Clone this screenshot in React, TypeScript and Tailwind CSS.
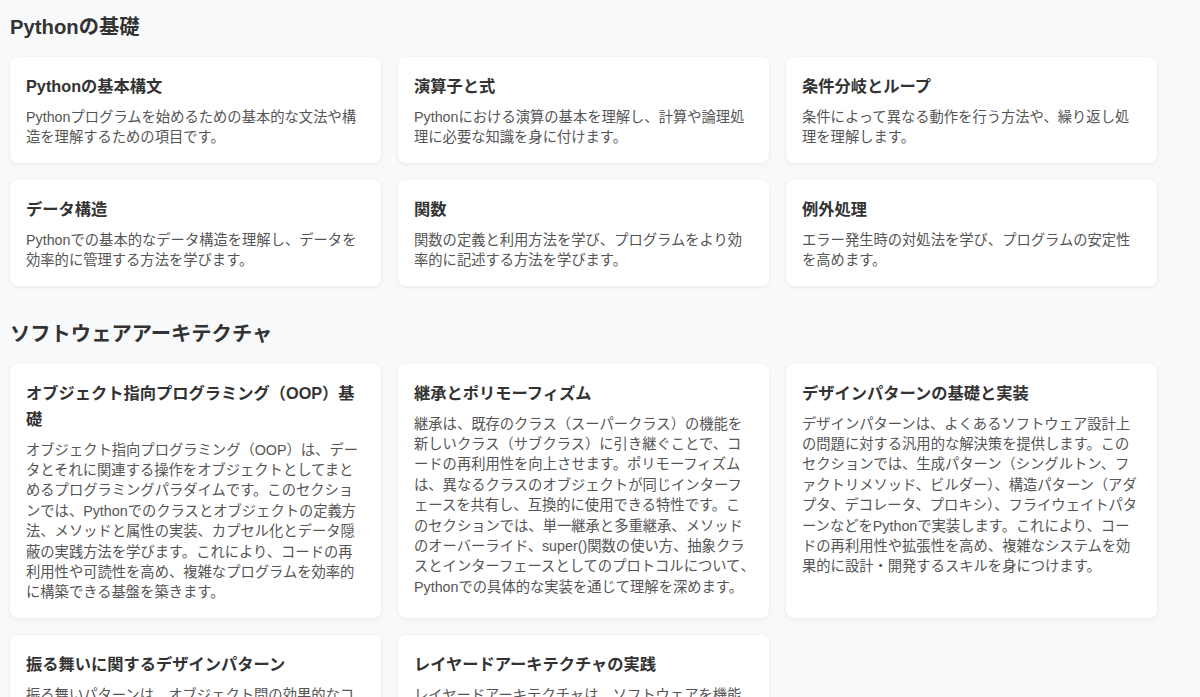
import React from "react";

type Topic = {
  title: string;
  description: React.ReactNode;
};

type Section = {
  heading: string;
  topics: Topic[];
};

const sections: Section[] = [
  {
    heading: "Pythonの基礎",
    topics: [
      {
        title: "Pythonの基本構文",
        description:
          "Pythonプログラムを始めるための基本的な文法や構造を理解するための項目です。",
      },
      {
        title: "演算子と式",
        description:
          "Pythonにおける演算の基本を理解し、計算や論理処理に必要な知識を身に付けます。",
      },
      {
        title: "条件分岐とループ",
        description: "条件によって異なる動作を行う方法や、繰り返し処理を理解します。",
      },
      {
        title: "データ構造",
        description:
          "Pythonでの基本的なデータ構造を理解し、データを効率的に管理する方法を学びます。",
      },
      {
        title: "関数",
        description:
          "関数の定義と利用方法を学び、プログラムをより効率的に記述する方法を学びます。",
      },
      {
        title: "例外処理",
        description: "エラー発生時の対処法を学び、プログラムの安定性を高めます。",
      },
    ],
  },
  {
    heading: "ソフトウェアアーキテクチャ",
    topics: [
      {
        title: "オブジェクト指向プログラミング（OOP）基礎",
        description:
          "オブジェクト指向プログラミング（OOP）は、データとそれに関連する操作をオブジェクトとしてまとめるプログラミングパラダイムです。このセクションでは、Pythonでのクラスとオブジェクトの定義方法、メソッドと属性の実装、カプセル化とデータ隠蔽の実践方法を学びます。これにより、コードの再利用性や可読性を高め、複雑なプログラムを効率的に構築できる基盤を築きます。",
      },
      {
        title: "継承とポリモーフィズム",
        description: (
          <>
            継承は、既存のクラス（スーパークラス）の機能を新しいクラス（サブクラス）に引き継ぐことで、コードの再利用性を向上させます。ポリモーフィズムは、異なるクラスのオブジェクトが同じインターフェースを共有し、互換的に使用できる特性です。このセクションでは、単一継承と多重継承、メソッドのオーバーライド、super()関数の使い方、抽象クラスとインターフェースとしてのプロトコルについて
            {/* line-end punctuation is set half width here */}
            <span className="inline-block w-[7px] overflow-visible">、</span>
            Pythonでの具体的な実装を通じて理解を深めます。
          </>
        ),
      },
      {
        title: "デザインパターンの基礎と実装",
        description:
          "デザインパターンは、よくあるソフトウェア設計上の問題に対する汎用的な解決策を提供します。このセクションでは、生成パターン（シングルトン、ファクトリメソッド、ビルダー）、構造パターン（アダプタ、デコレータ、プロキシ）、フライウェイトパターンなどをPythonで実装します。これにより、コードの再利用性や拡張性を高め、複雑なシステムを効果的に設計・開発するスキルを身につけます。",
      },
      {
        title: "振る舞いに関するデザインパターン",
        description:
          "振る舞いパターンは、オブジェクト間の効果的なコミュニケーションと責任の分担を実現します。このセクションでは、オブザーバー、ストラテジー、コマンド、イテレータなどのパターンをPythonで実装し、柔軟で変更に強い設計を学びます。",
      },
      {
        title: "レイヤードアーキテクチャの実践",
        description:
          "レイヤードアーキテクチャは、ソフトウェアを機能ごとの層に分割し、各層の責務を明確にする設計手法です。プレゼンテーション層、ビジネスロジック層、データアクセス層の分離をPythonで実践します。",
      },
    ],
  },
];

function TopicCard({ topic }: { topic: Topic }) {
  return (
    <div className="rounded-lg bg-white px-4 pt-4 pb-[15px] shadow-[0_1px_4px_rgba(0,0,0,0.07)]">
      <h3 className="mb-2 text-[16.25px] font-bold leading-[26px] text-[#333333]">
        {topic.title}
      </h3>
      <p className="text-[14.3px] leading-[20.4px] text-[#555555]">{topic.description}</p>
    </div>
  );
}

export default function App() {
  return (
    <div
      className="min-h-screen bg-[#f8f9fb] px-[10px] pt-[13px]"
      style={{ fontFamily: '"Liberation Sans", "Noto Sans CJK JP", sans-serif' }}
    >
      <div className="w-[1147px]">
        {sections.map((section) => (
          <section key={section.heading} className="mb-[34px]">
            <h2 className="mb-4 text-[20.3px] font-bold leading-7 text-[#333333]">
              {section.heading}
            </h2>
            <div className="grid grid-cols-3 gap-[17px]">
              {section.topics.map((topic) => (
                <TopicCard key={topic.title} topic={topic} />
              ))}
            </div>
          </section>
        ))}
      </div>
    </div>
  );
}
